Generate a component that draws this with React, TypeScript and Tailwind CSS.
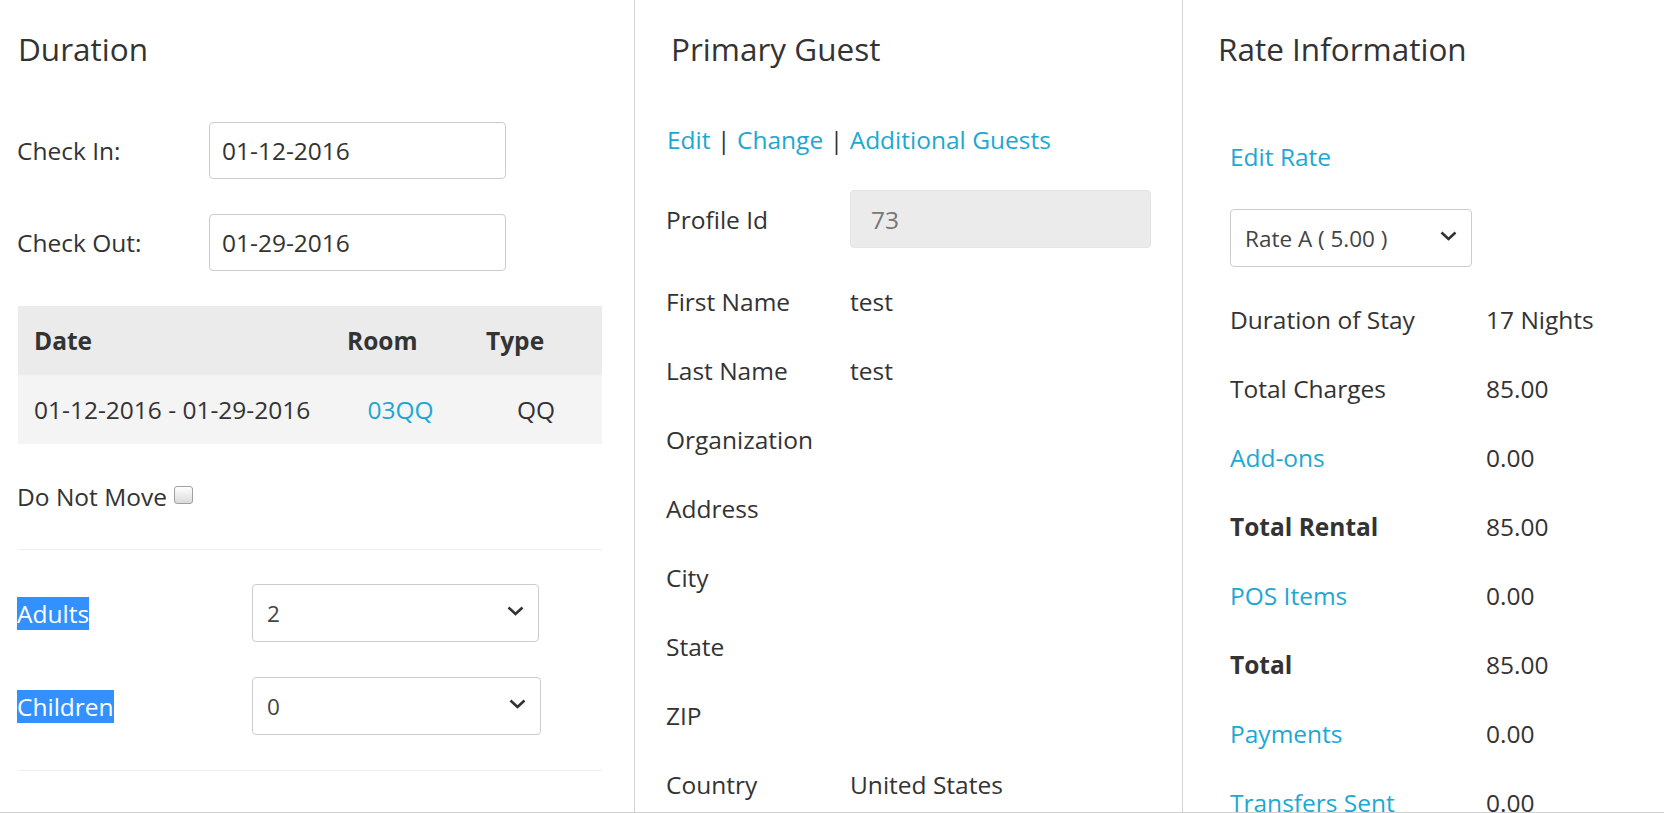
import React from 'react'

const LINK = 'text-[#1ca8d4]'

function Chevron() {
  return (
    <svg width="17" height="10" viewBox="0 0 17 10" fill="none" className="-translate-y-[2px]">
      <path d="M1.5 1.5 L8.5 8 L15.5 1.5" stroke="#333" strokeWidth="2.6" />
    </svg>
  )
}

function SelectBox({ value, width }: { value: string; width: string }) {
  return (
    <div
      className={`${width} h-full flex items-center justify-between border border-[#ccc] rounded-[4px] pl-[14px] pr-[14px] text-[22.5px] text-[#444] bg-white`}
    >
      <span>{value}</span>
      <Chevron />
    </div>
  )
}

function DateInput({ value }: { value: string }) {
  return (
    <div className="w-[297px] h-full flex items-center border border-[#ccc] rounded-[4px] px-3 text-[#333] bg-white">
      {value}
    </div>
  )
}

const guestRows = [
  { label: 'First Name', value: 'test' },
  { label: 'Last Name', value: 'test' },
  { label: 'Organization', value: '' },
  { label: 'Address', value: '' },
  { label: 'City', value: '' },
  { label: 'State', value: '' },
  { label: 'ZIP', value: '' },
  { label: 'Country', value: 'United States' },
]

const rateRows = [
  { label: 'Duration of Stay', value: '17 Nights', kind: 'plain' },
  { label: 'Total Charges', value: '85.00', kind: 'plain' },
  { label: 'Add-ons', value: '0.00', kind: 'link' },
  { label: 'Total Rental', value: '85.00', kind: 'bold' },
  { label: 'POS Items', value: '0.00', kind: 'link' },
  { label: 'Total', value: '85.00', kind: 'bold' },
  { label: 'Payments', value: '0.00', kind: 'link' },
  { label: 'Transfers Sent', value: '0.00', kind: 'link' },
]

export default function App() {
  return (
    <div className="h-[813px] overflow-hidden border-b border-[#d0d0d0] bg-white flex text-[24.5px] leading-[33px] text-[#333] font-['Open_Sans',sans-serif]">
      {/* Duration */}
      <div className="w-[635px] shrink-0 border-r border-[#d3d3d3] pl-[17px] pr-[32px]">
        <h3 className="mt-[27px] ml-[1px] h-[44px] text-[31.5px] leading-[44px] font-normal">Duration</h3>

        <div className="mt-[51px] h-[57px] flex items-center">
          <span className="w-[192px]">Check In:</span>
          <DateInput value="01-12-2016" />
        </div>
        <div className="mt-[35px] h-[57px] flex items-center">
          <span className="w-[192px]">Check Out:</span>
          <DateInput value="01-29-2016" />
        </div>

        <div className="mt-[35px] ml-[1px]">
          <div className="h-[69px] grid grid-cols-[313px_139px_1fr] items-center bg-[#ebebeb] font-bold">
            <span className="pl-4">Date</span>
            <span className="pl-4">Room</span>
            <span className="pl-4">Type</span>
          </div>
          <div className="h-[69px] grid grid-cols-[313px_139px_1fr] items-center bg-[#f4f4f4]">
            <span className="pl-4">01-12-2016 - 01-29-2016</span>
            <span className={`text-center ${LINK}`}>03QQ</span>
            <span className="text-center">QQ</span>
          </div>
        </div>

        <div className="mt-[36px] h-[33px] flex items-center">
          <span>Do Not Move</span>
          <span className="ml-[7px] mb-[3px] w-[19px] h-[18px] rounded-[3px] border border-[#a0a0a0] bg-linear-to-b from-white to-[#dadada]" />
        </div>

        <div className="mt-[36px] ml-[1px] border-t border-[#eeeeee]" />

        <div className="mt-[34px] h-[58px] flex items-center">
          <span className="w-[235px]">
            <span className="bg-[#3390ff] text-white">Adults</span>
          </span>
          <SelectBox value="2" width="w-[287px]" />
        </div>
        <div className="mt-[35px] h-[58px] flex items-center">
          <span className="w-[235px]">
            <span className="bg-[#3390ff] text-white">Children</span>
          </span>
          <SelectBox value="0" width="w-[289px]" />
        </div>

        <div className="mt-[35px] ml-[1px] border-t border-[#eeeeee]" />
      </div>

      {/* Primary Guest */}
      <div className="w-[548px] shrink-0 border-r border-[#d3d3d3] pl-[31px]">
        <h3 className="mt-[27px] ml-[5px] h-[44px] text-[31.5px] leading-[44px] font-normal">Primary Guest</h3>

        <div className="mt-[52px] ml-[1px] h-[33px] flex items-center">
          <a className={LINK}>Edit</a>
          <span className="mx-[6.5px]">|</span>
          <a className={LINK}>Change</a>
          <span className="mx-[6.5px]">|</span>
          <a className={LINK}>Additional Guests</a>
        </div>

        <div className="mt-[34px] h-[58px] flex items-center">
          <span className="w-[184px]">Profile Id</span>
          <div className="w-[301px] h-full flex items-center rounded-[4px] border border-[#e4e4e4] bg-[#ebebeb] pl-[20px] text-[#777]">
            73
          </div>
        </div>

        <div className="mt-[19px]">
          {guestRows.map((r) => (
            <div key={r.label} className="h-[69px] flex items-center">
              <span className="w-[184px]">{r.label}</span>
              <span>{r.value}</span>
            </div>
          ))}
        </div>
      </div>

      {/* Rate Information */}
      <div className="flex-1 min-w-0">
        <h3 className="mt-[27px] ml-[35px] h-[44px] text-[31.5px] leading-[44px] font-normal">Rate Information</h3>

        <div className="ml-[47px]">
          <div className="mt-[69px] h-[33px] flex items-center">
            <a className={LINK}>Edit Rate</a>
          </div>

          <div className="mt-[36px] h-[58px] flex items-center">
            <div className="w-[242px] h-full flex items-center justify-between border border-[#ccc] rounded-[4px] pl-[14px] pr-[14px] text-[22.5px] text-[#444]">
              <span>Rate A ( 5.00 )</span>
              <Chevron />
            </div>
          </div>

          <div className="mt-[18px]">
            {rateRows.map((r) => (
              <div key={r.label} className="h-[69px] flex items-center">
                <span
                  className={`w-[256px] ${r.kind === 'link' ? LINK : ''} ${r.kind === 'bold' ? 'font-bold' : ''}`}
                >
                  {r.label}
                </span>
                <span>{r.value}</span>
              </div>
            ))}
          </div>
        </div>
      </div>
    </div>
  )
}
